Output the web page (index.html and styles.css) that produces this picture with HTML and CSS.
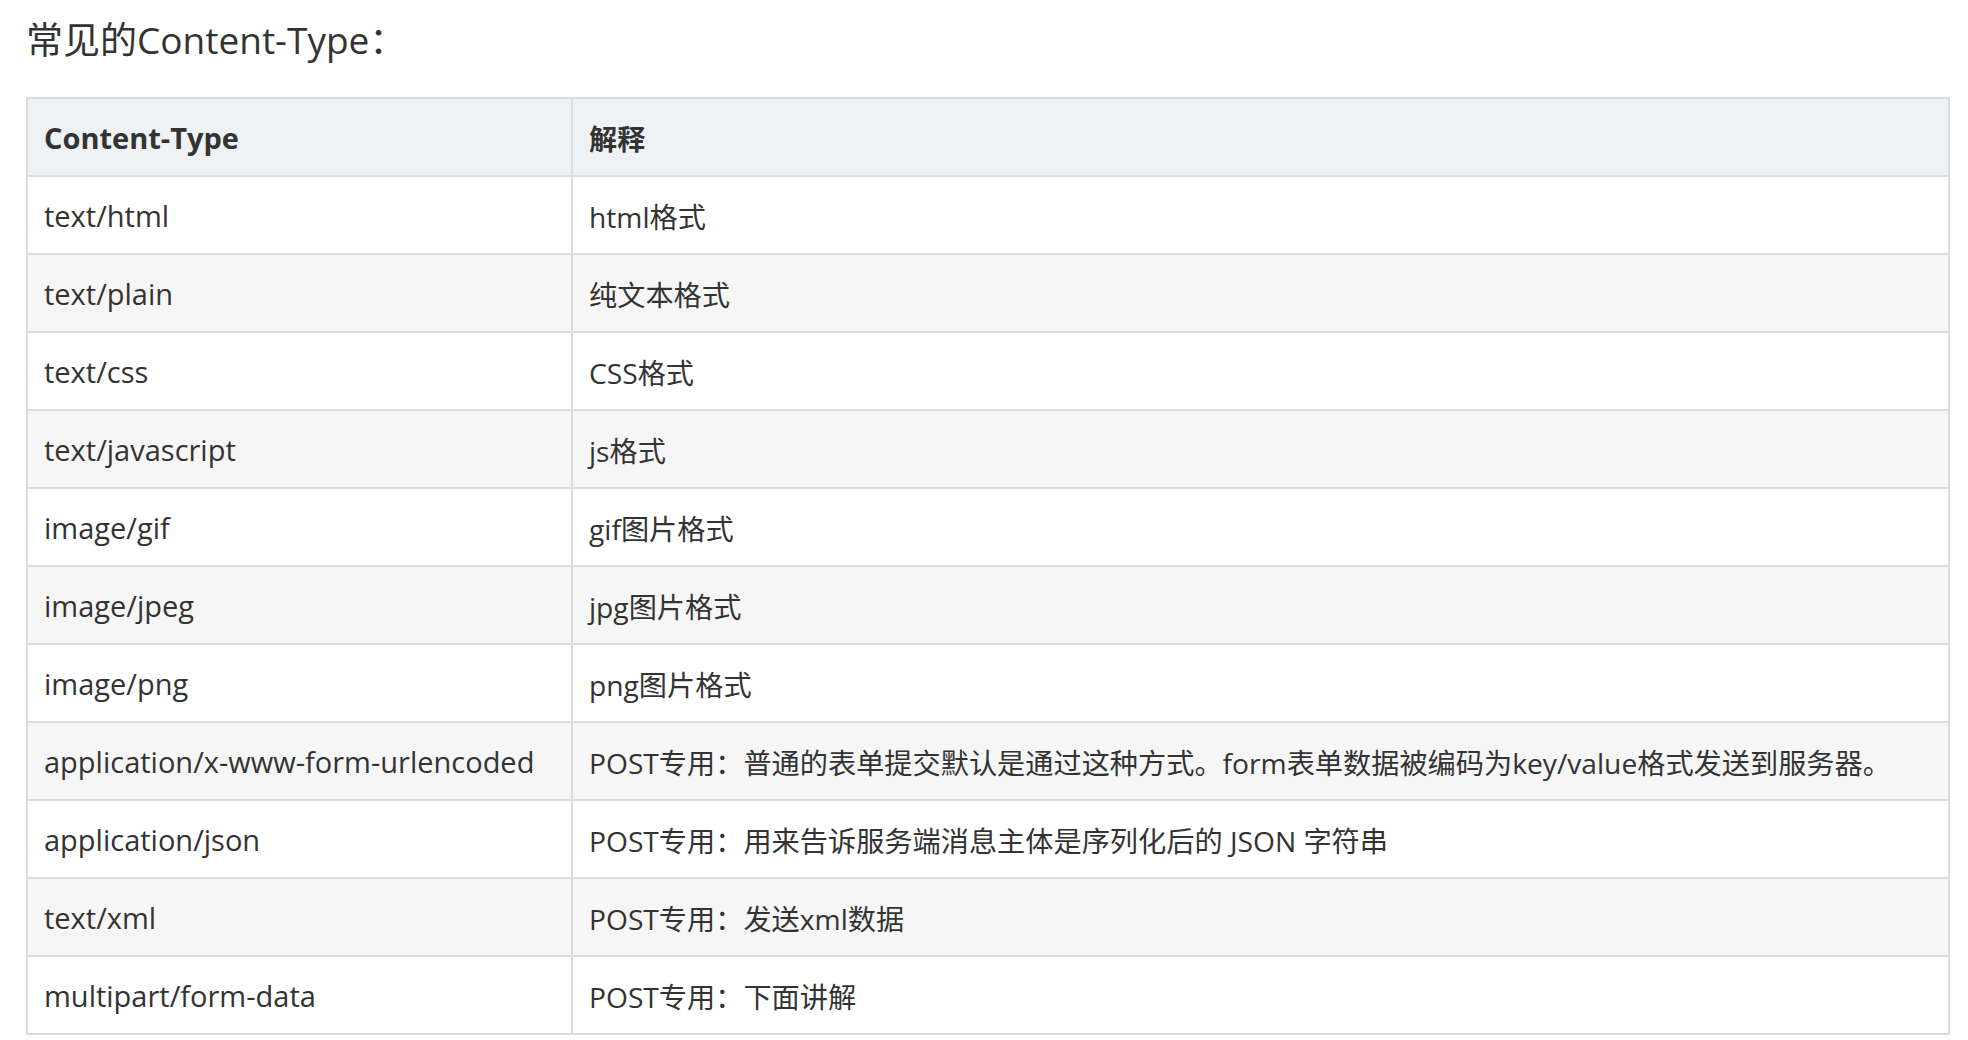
FILE: index.html
```html
<!DOCTYPE html>
<html lang="zh-CN">
<head>
<meta charset="utf-8">
<title>常见的Content-Type</title>
<link rel="stylesheet" href="styles.css">
</head>
<body>
<div class="page">
  <h3 class="title">常见的Content-Type：</h3>
  <table class="ct-table">
    <thead>
      <tr><th class="col-type">Content-Type</th><th class="col-desc">解释</th></tr>
    </thead>
    <tbody>
      <tr><td class="type">text/html</td><td>html格式</td></tr>
      <tr><td class="type">text/plain</td><td>纯文本格式</td></tr>
      <tr><td class="type">text/css</td><td>CSS格式</td></tr>
      <tr><td class="type">text/javascript</td><td>js格式</td></tr>
      <tr><td class="type">image/gif</td><td>gif图片格式</td></tr>
      <tr><td class="type">image/jpeg</td><td>jpg图片格式</td></tr>
      <tr><td class="type">image/png</td><td>png图片格式</td></tr>
      <tr><td class="type">application/x-www-form-urlencoded</td><td>POST专用：普通的表单提交默认是通过这种方式。form表单数据被编码为key/value格式发送到服务器。</td></tr>
      <tr><td class="type">application/json</td><td>POST专用：用来告诉服务端消息主体是序列化后的 JSON 字符串</td></tr>
      <tr><td class="type">text/xml</td><td>POST专用：发送xml数据</td></tr>
      <tr><td class="type">multipart/form-data</td><td>POST专用：下面讲解</td></tr>
    </tbody>
  </table>
</div>
</body>
</html>
```
FILE: styles.css
```css
html, body {
  margin: 0;
  padding: 0;
  background: #ffffff;
}

body {
  font-family: "Open Sans", "Noto Sans CJK SC", sans-serif;
  color: #333333;
}

.page {
  padding: 15px 18px 0 26px;
}

.title {
  margin: 0 0 32px 0;
  font-size: 37px;
  line-height: 50px;
  font-weight: normal;
  color: #333333;
}

.ct-table {
  width: 1924px;
  border-collapse: collapse;
  font-size: 28.2px;
}

.ct-table th,
.ct-table td {
  border: 2px solid #dcdcdc;
  height: 76px;
  padding: 0 16px;
  text-align: left;
  vertical-align: middle;
  box-sizing: content-box;
}

.ct-table .col-type {
  width: 511px;
  font-size: 29px;
}

.ct-table .type {
  font-size: 29px;
}

.ct-table thead tr {
  background: #eff2f5;
}

.ct-table th {
  font-weight: bold;
}

.ct-table tbody tr:nth-child(even) {
  background: #f6f6f6;
}

.ct-table tbody tr:nth-child(odd) {
  background: #ffffff;
}
```
